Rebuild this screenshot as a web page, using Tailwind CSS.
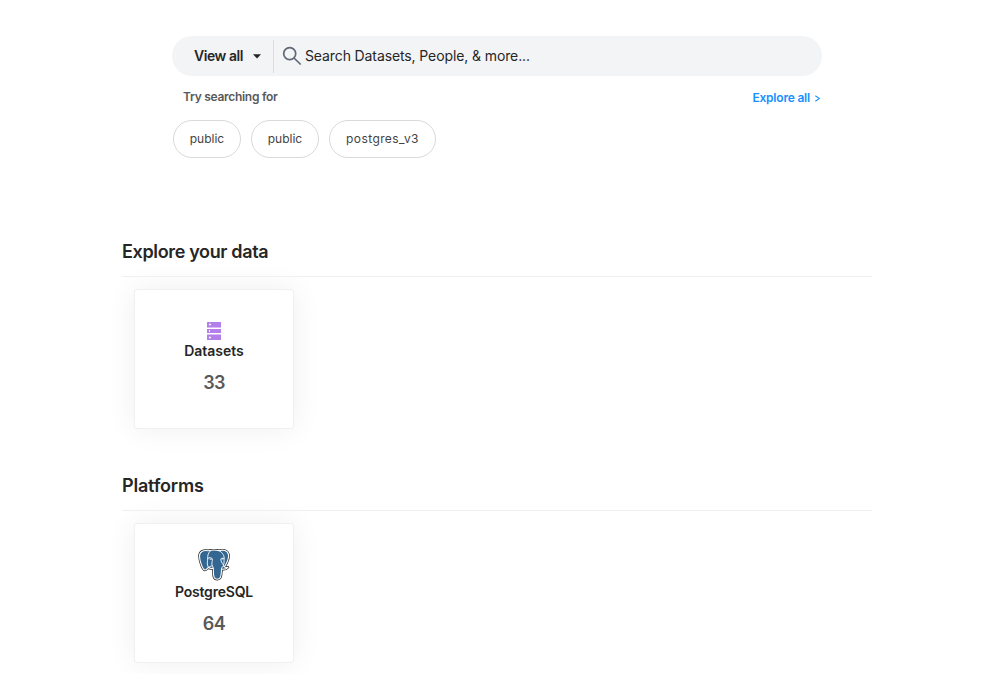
<!DOCTYPE html>
<html lang="en">
<head>
<meta charset="utf-8">
<title>Home</title>
<script src="https://cdn.jsdelivr.net/npm/@tailwindcss/browser@4"></script>
</head>
<body class="h-[674px] overflow-hidden bg-white font-['Inter','Liberation_Sans',sans-serif] text-[#262626]">
<header class="ml-[172px] w-[650px] pt-9">
  <div class="flex h-10 items-center rounded-full bg-[#f3f4f6]">
    <button class="flex h-[33px] w-[102px] items-center border-r border-[#d9dce1] pl-[22px] text-sm font-semibold">
      <span class="w-[49px] whitespace-nowrap tracking-[-0.45px]">View all</span>
      <svg class="ml-[10px] h-[5px] w-2" viewBox="0 0 8 5"><path d="M0 0.3H8L4 4.5Z" fill="#212529"/></svg>
    </button>
    <svg class="ml-2 h-5 w-5" viewBox="0 0 20 20" fill="none" stroke="#5f6875" stroke-width="1.7"><circle cx="7.7" cy="7.7" r="6"/><path d="M12 12L18.7 18.5"/></svg>
    <span class="ml-[3px] whitespace-nowrap text-sm tracking-[-0.11px]">Search Datasets, People, &amp; more...</span>
  </div>
  <div class="flex h-[44px] items-start justify-between pl-[11px] pr-[2px] pt-3 text-xs leading-[18px]">
    <span class="font-semibold tracking-[-0.28px] text-[#595959]">Try searching for</span>
    <a class="flex items-center pt-px font-semibold tracking-[-0.2px] text-[#1890ff]">Explore all
      <svg class="ml-[5px] h-[7px] w-[5px]" viewBox="0 0 5 7" fill="none" stroke="#1890ff" stroke-width="1.1"><path d="M.3 .7L4.5 3.5L.3 6.3"/></svg>
    </a>
  </div>
  <div class="flex gap-[10px] pl-px text-xs text-[#434343]">
    <span class="flex h-[38px] w-[68px] items-center justify-center rounded-full border border-[#d9d9d9]">public</span>
    <span class="flex h-[38px] w-[68px] items-center justify-center rounded-full border border-[#d9d9d9]">public</span>
    <span class="flex h-[38px] w-[107px] items-center justify-center rounded-full border border-[#d9d9d9] tracking-[0.4px]">postgres_v3</span>
  </div>
</header>
<main class="ml-[122px] w-[750px] pt-[79px]">
  <section class="h-[234px]">
    <h2 class="h-10 border-b border-[#f0f0f0] text-lg font-semibold leading-[30px] tracking-[-0.35px]">Explore your data</h2>
    <div class="ml-3 mt-3 flex h-[140px] w-40 flex-col items-center rounded-[3px] border border-[#f0f0f0] bg-white pt-8 shadow-[0_0_30px_0_#efefef]">
      <svg class="h-[18px] w-[14px]" viewBox="0 0 14 18"><path fill="#b37feb" d="M.5 0h13q.5 0 .5.5V5H0V.5Q0 0 .5 0ZM0 7h14v4H0ZM0 13h14v4.5q0 .5-.5.5H.5q-.5 0-.5-.5Z"/><path fill="#d8baf5" d="M0 5h14v1H0ZM0 12h14v1H0Z"/><path fill="#fff" d="M2 2h2v1H2ZM2.5 1.5h1v2h-1ZM2 8h1v2H2ZM2 15h2v1H2ZM2.5 14.5h1v2h-1Z"/></svg>
      <span class="text-sm font-semibold leading-[22px] tracking-[-0.02px]">Datasets</span>
      <span class="mt-[7px] text-lg font-semibold leading-7 tracking-[-0.7px] text-[#595959]">33</span>
    </div>
  </section>
  <section>
    <h2 class="h-10 border-b border-[#f0f0f0] text-lg font-semibold leading-[30px] tracking-[-0.2px]">Platforms</h2>
    <div class="ml-3 mt-3 flex h-[140px] w-40 flex-col items-center rounded-[3px] border border-[#f0f0f0] bg-white pt-[25px] shadow-[0_0_30px_0_#efefef]">
      <svg class="h-8 w-8" viewBox="0 0 32 32" stroke-linecap="round" stroke-linejoin="round">
        <path d="M10.5 1.8C6 .8 1.5 2 1.5 7c0 4.8 3 14 5.6 14 1.2 0 2.1-1.3 3.3-2.5 1.2 1 3 1.1 4.8.8.4 2.5-.2 6.8 1 9.3 1.1 2.2 5 2.2 6.2-.2 1.1-2.1.8-5.7 1.2-8.2 2.2.3 5.1-.3 6.3-1.9-1.1.3-2.7.3-3.5-.4 2.4-3.6 4.6-8.6 4.1-12.1C29.9 1.3 25 .4 21.1 1.6 17.6.7 14 .7 10.5 1.8Z" fill="#336791" stroke="#222" stroke-width="2.5"/>
        <path d="M10.5 1.8C6 .8 1.5 2 1.5 7c0 4.8 3 14 5.6 14 1.2 0 2.1-1.3 3.3-2.5 1.2 1 3 1.1 4.8.8.4 2.5-.2 6.8 1 9.3 1.1 2.2 5 2.2 6.2-.2 1.1-2.1.8-5.7 1.2-8.2 2.2.3 5.1-.3 6.3-1.9-1.1.3-2.7.3-3.5-.4 2.4-3.6 4.6-8.6 4.1-12.1C29.9 1.3 25 .4 21.1 1.6 17.6.7 14 .7 10.5 1.8Z" fill="#336791" stroke="#fff" stroke-width="1.1"/>
        <g fill="none" stroke="#fff" stroke-width=".9"><path d="M12.5 1.9C10 4 9.6 6.5 9.7 9.5c0 3-1.4 5.2.7 9M9.7 9.4c1.8-1.2 4.1-1.1 4.6.7.4 1.8-.8 3.4-.4 5.2.2 1 1 1.7 1.3 4M10.4 18.5c1.4-.5 1.8-1.3 3.2-1.7M21.1 1.6c3.6 2 5.5 5.6 5 8.1-.2 2.3.3 4.2-.6 6.2-.3 1 .5 1.6 1.5 1.9M26.1 9.5c-1.2-.5-2.6-.4-3.2.4-.2 2.2 1 4.1 2.6 6.1M25.5 17.2c-1 .1-1.8.8-2 2.7"/></g>
        <path d="M12 10.2h1.3M24 9.9h1" stroke="#fff" stroke-width=".9"/>
      </svg>
      <span class="text-sm font-semibold leading-[22px] tracking-[-0.2px]">PostgreSQL</span>
      <span class="mt-[7px] text-lg font-semibold leading-7 text-[#595959] tracking-[-0.5px]">64</span>
    </div>
  </section>
</main>
</body>
</html>
